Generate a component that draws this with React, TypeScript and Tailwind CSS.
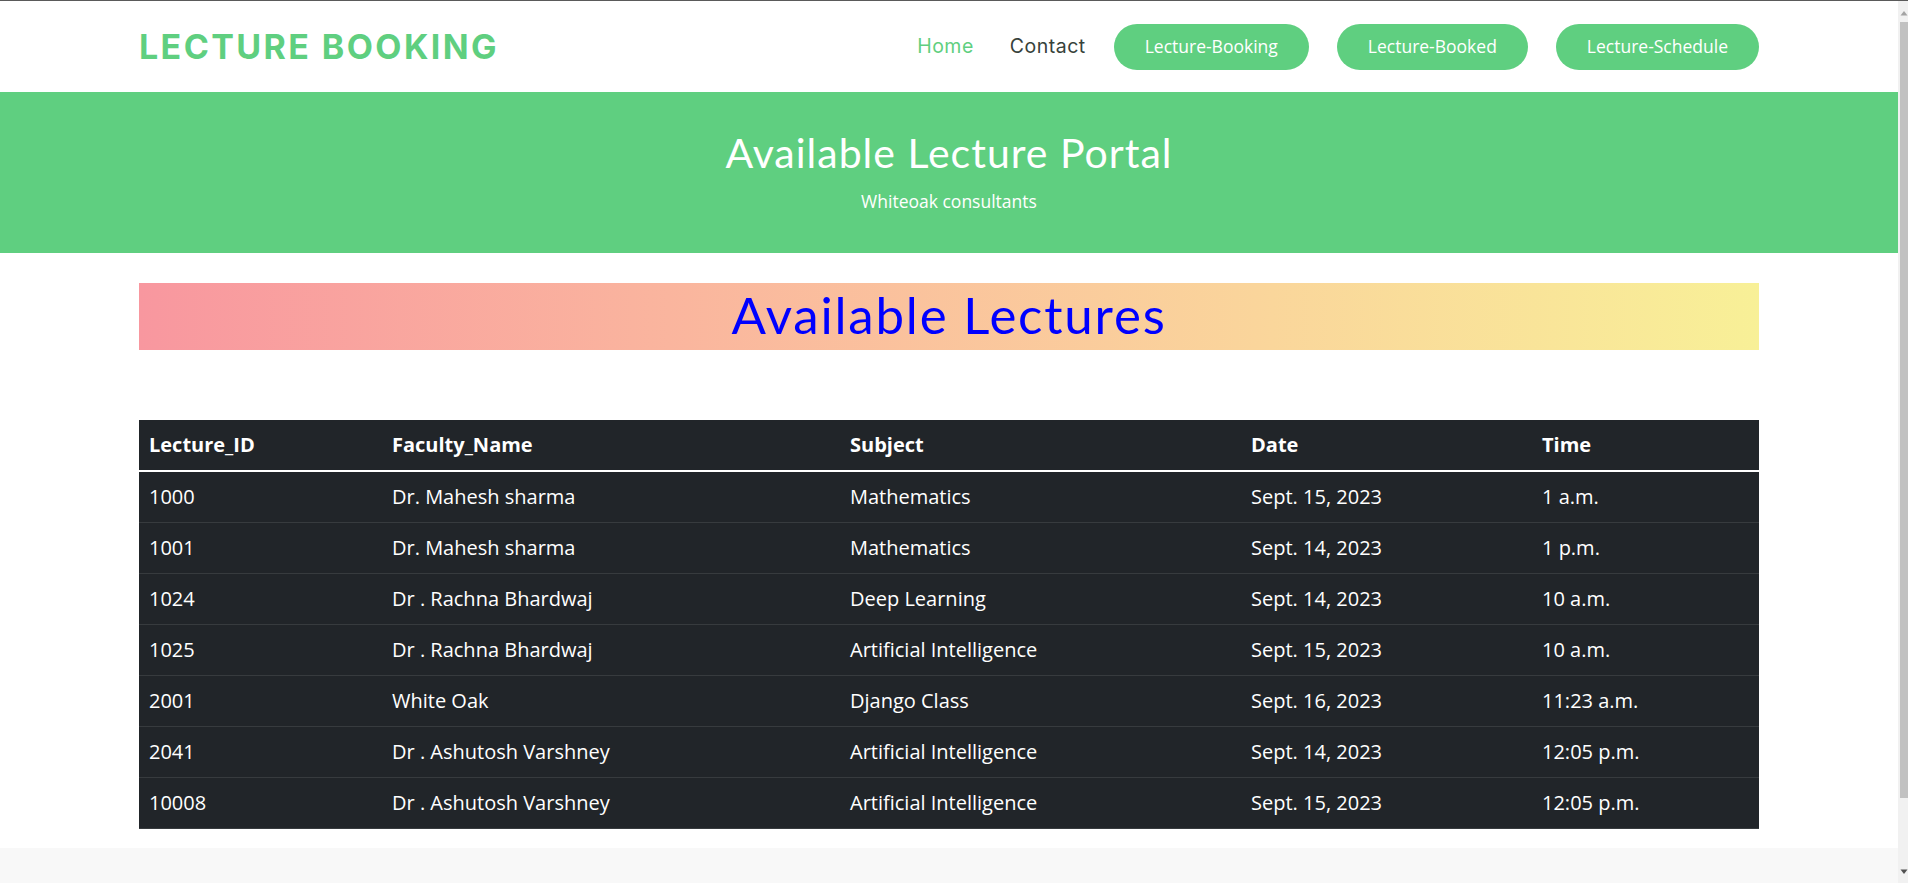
import React from "react";

const rows = [
  ["1000", "Dr. Mahesh sharma", "Mathematics", "Sept. 15, 2023", "1 a.m."],
  ["1001", "Dr. Mahesh sharma", "Mathematics", "Sept. 14, 2023", "1 p.m."],
  ["1024", "Dr . Rachna Bhardwaj", "Deep Learning", "Sept. 14, 2023", "10 a.m."],
  ["1025", "Dr . Rachna Bhardwaj", "Artificial Intelligence", "Sept. 15, 2023", "10 a.m."],
  ["2001", "White Oak", "Django Class", "Sept. 16, 2023", "11:23 a.m."],
  ["2041", "Dr . Ashutosh Varshney", "Artificial Intelligence", "Sept. 14, 2023", "12:05 p.m."],
  ["10008", "Dr . Ashutosh Varshney", "Artificial Intelligence", "Sept. 15, 2023", "12:05 p.m."],
];

const headers = ["Lecture_ID", "Faculty_Name", "Subject", "Date", "Time"];
const colWidths = ["w-[243px]", "w-[458px]", "w-[401px]", "w-[291px]", "w-[227px]"];

const Navbar = () => (
  <header className="h-[91px] bg-white">
    <div className="w-[1620px] mx-auto h-full flex items-center justify-between">
      <a className="font-['Inter',sans-serif] font-bold text-[34px] tracking-[2.4px] text-[#5fcf80] leading-none">
        LECTURE BOOKING
      </a>
      <nav className="flex items-center font-['Inter',sans-serif] font-normal text-[19.5px] tracking-[0.5px]">
        <a className="text-[#5fcf80]">Home</a>
        <a className="ml-[36px] text-[#37423b]">Contact</a>
        {["Lecture-Booking", "Lecture-Booked", "Lecture-Schedule"].map((b) => (
          <a
            key={b}
            className="ml-[28px] h-[46px] px-[31px] flex items-center rounded-full bg-[#5fcf80] text-white font-['Open_Sans',sans-serif] font-normal tracking-normal text-[17.5px]"
          >
            {b}
          </a>
        ))}
      </nav>
    </div>
  </header>
);

const Scrollbar = () => (
  <aside className="w-[10px] h-full bg-[#f1f1f1] flex flex-col items-end">
    <svg width="8" height="6" viewBox="0 0 8 6" className="mt-[9px]">
      <path d="M4 1 L7.5 5.5 L0.5 5.5 Z" fill="#a3a3a3" />
    </svg>
    <div className="mt-[6px] w-[8px] h-[776px] bg-[#c1c1c1]" />
    <div className="flex-1" />
    <svg width="8" height="6" viewBox="0 0 8 6" className="mb-[8px]">
      <path d="M0.5 0.5 L7.5 0.5 L4 5 Z" fill="#505050" />
    </svg>
  </aside>
);

export default function App() {
  return (
    <div className="h-[883px] overflow-hidden flex border-t border-[#5a5a5a] bg-white">
      <main className="flex-1 flex flex-col">
        <Navbar />
        <section className="h-[161px] bg-[#5fcf80] flex flex-col items-center text-white">
          <h2 className="mt-[37px] font-['Lato',sans-serif] text-[41px] tracking-[1px] leading-[48px] font-normal">
            Available Lecture Portal
          </h2>
          <p className="mt-[11px] font-['Open_Sans',sans-serif] text-[17.5px] leading-[26px]">
            Whiteoak consultants
          </p>
        </section>
        <section className="w-[1620px] mx-auto pt-[30px]">
          <div className="h-[67px] flex items-center justify-center bg-gradient-to-r from-[#f8979f] to-[#f8f097]">
            <h1 className="font-['Lato',sans-serif] text-[51px] tracking-[1.8px] leading-none text-[#0000ff] pb-[4px]">
              Available Lectures
            </h1>
          </div>
          <table className="mt-[70px] w-full table-fixed border-collapse bg-[#212529] text-white font-['Open_Sans',sans-serif] text-[20px] leading-[30px]">
            <thead>
              <tr className="border-b-2 border-white">
                {headers.map((h, i) => (
                  <th key={h} className={`${colWidths[i]} text-left font-bold p-[10px]`}>
                    {h}
                  </th>
                ))}
              </tr>
            </thead>
            <tbody>
              {rows.map((r) => (
                <tr key={r[0]} className="border-b border-[#373b3e]">
                  {r.map((c, i) => (
                    <td key={i} className="p-[10px] whitespace-nowrap">
                      {c}
                    </td>
                  ))}
                </tr>
              ))}
            </tbody>
          </table>
        </section>
        <div className="flex-1" />
        <footer className="h-[35px] bg-[#f8f8f8]" />
      </main>
      <Scrollbar />
    </div>
  );
}
